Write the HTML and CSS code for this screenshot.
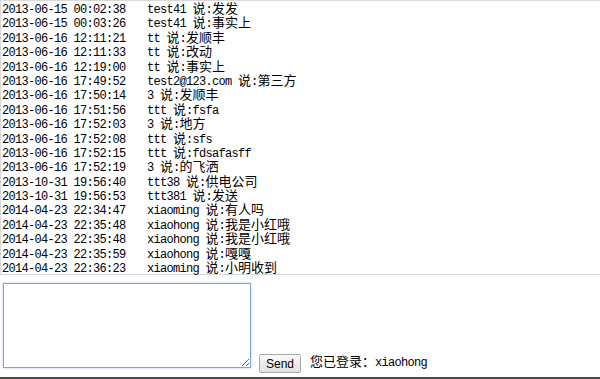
FILE: index.html
```html
<!DOCTYPE html>
<html lang="zh-CN">
<head>
    <meta charset="UTF-8">
    <title>聊天室</title>
    <link rel="stylesheet" href="styles.css">
</head>
<body>
    <div class="page">
        <div id="chatLog" class="chat-log">
            <div class="msg"><span class="time">2013-06-15 00:02:38</span>test41 <span class="zh">说</span>:<span class="zh">发发</span></div>
            <div class="msg"><span class="time">2013-06-15 00:03:26</span>test41 <span class="zh">说</span>:<span class="zh">事实上</span></div>
            <div class="msg"><span class="time">2013-06-16 12:11:21</span>tt <span class="zh">说</span>:<span class="zh">发顺丰</span></div>
            <div class="msg"><span class="time">2013-06-16 12:11:33</span>tt <span class="zh">说</span>:<span class="zh">改动</span></div>
            <div class="msg"><span class="time">2013-06-16 12:19:00</span>tt <span class="zh">说</span>:<span class="zh">事实上</span></div>
            <div class="msg"><span class="time">2013-06-16 17:49:52</span>test2@123.com <span class="zh">说</span>:<span class="zh">第三方</span></div>
            <div class="msg"><span class="time">2013-06-16 17:50:14</span>3 <span class="zh">说</span>:<span class="zh">发顺丰</span></div>
            <div class="msg"><span class="time">2013-06-16 17:51:56</span>ttt <span class="zh">说</span>:fsfa</div>
            <div class="msg"><span class="time">2013-06-16 17:52:03</span>3 <span class="zh">说</span>:<span class="zh">地方</span></div>
            <div class="msg"><span class="time">2013-06-16 17:52:08</span>ttt <span class="zh">说</span>:sfs</div>
            <div class="msg"><span class="time">2013-06-16 17:52:15</span>ttt <span class="zh">说</span>:fdsafasff</div>
            <div class="msg"><span class="time">2013-06-16 17:52:19</span>3 <span class="zh">说</span>:<span class="zh">的飞洒</span></div>
            <div class="msg"><span class="time">2013-10-31 19:56:40</span>ttt38 <span class="zh">说</span>:<span class="zh">供电公司</span></div>
            <div class="msg"><span class="time">2013-10-31 19:56:53</span>ttt381 <span class="zh">说</span>:<span class="zh">发送</span></div>
            <div class="msg"><span class="time">2014-04-23 22:34:47</span>xiaoming <span class="zh">说</span>:<span class="zh">有人吗</span></div>
            <div class="msg"><span class="time">2014-04-23 22:35:48</span>xiaohong <span class="zh">说</span>:<span class="zh">我是小红哦</span></div>
            <div class="msg"><span class="time">2014-04-23 22:35:48</span>xiaohong <span class="zh">说</span>:<span class="zh">我是小红哦</span></div>
            <div class="msg"><span class="time">2014-04-23 22:35:59</span>xiaohong <span class="zh">说</span>:<span class="zh">嘎嘎</span></div>
            <div class="msg"><span class="time">2014-04-23 22:36:23</span>xiaoming <span class="zh">说</span>:<span class="zh">小明收到</span></div>
        </div>

        <form id="sendForm" class="compose">
            <textarea id="content" class="compose-input" autofocus></textarea>
            <button type="submit" class="send-btn">Send</button>
            <span class="login-info"><span class="zh">您已登录：</span>xiaohong</span>
        </form>
    </div>
</body>
</html>
```

FILE: styles.css
```css
* { box-sizing: border-box; }

body { margin: 0; color: #000; background: #fff; font-family: "Liberation Mono", "Noto Sans CJK SC", monospace; }

.page { height: 100vh; border-bottom: 2px solid #4a4a4a; overflow: hidden; }

.chat-log { border: 1px solid #d9d9d9; border-right: none; padding-left: 1px; }

.msg { height: 14.4px; line-height: 14.4px; font-size: 12px; letter-spacing: -0.7px; white-space: nowrap; }

.time { display: inline-block; width: 145px; }

.zh { font-family: "Noto Sans CJK SC", sans-serif; font-size: 13px; line-height: 1; letter-spacing: 0; }

.compose { display: flex; align-items: flex-end; margin: 8px 0 0 3px; }

.compose-input { width: 248px; height: 85px; margin: 0 0 5px 0; border: 1px solid #7ea5e3; box-shadow: 0 0 2px #a9c6f2; outline: none; resize: both; }

.send-btn { width: 42px; height: 19px; margin-left: 8px; padding: 0; border: 1px solid #a9a9a9; border-radius: 2px; background: linear-gradient(#fbfbfb, #e2e2e2); font-family: "Liberation Sans", Arial, sans-serif; font-size: 12px; color: #000; }

.login-info { margin-left: 9px; line-height: 19px; font-size: 12px; letter-spacing: -0.7px; white-space: nowrap; }
```
